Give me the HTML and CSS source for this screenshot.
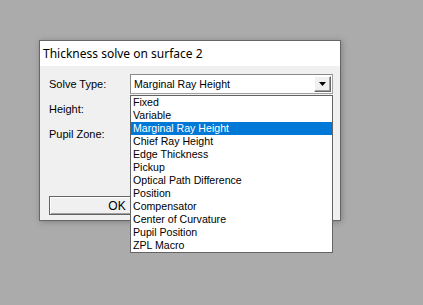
FILE: index.html
```html
<!DOCTYPE html>
<html>
<head>
    <title>Thickness solve on surface 2</title>
    <link rel="stylesheet" href="styles.css">
</head>
<body>
    <div class="dialog">
        <div class="titlebar">Thickness solve on surface 2</div>
        <div class="content">
            <div class="form">
                <label class="field-label">Solve Type:</label>
                <div class="combo-wrap">
                    <div class="combo">
                        <span class="combo-value">Marginal Ray Height</span>
                        <span class="combo-button">
                            <svg width="7" height="4" viewBox="0 0 7 4"><path d="M0 0H7L3.5 4Z" fill="#000"/></svg>
                        </span>
                    </div>
                    <ul class="dropdown">
                        <li>Fixed</li>
                        <li>Variable</li>
                        <li class="selected">Marginal Ray Height</li>
                        <li>Chief Ray Height</li>
                        <li>Edge Thickness</li>
                        <li>Pickup</li>
                        <li>Optical Path Difference</li>
                        <li>Position</li>
                        <li>Compensator</li>
                        <li>Center of Curvature</li>
                        <li>Pupil Position</li>
                        <li>ZPL Macro</li>
                    </ul>
                </div>

                <label class="field-label">Height:</label>
                <input class="field-input" type="text" value="0">

                <label class="field-label">Pupil Zone:</label>
                <input class="field-input" type="text" value="0">
            </div>

            <div class="buttons">
                <button class="btn btn-default">OK</button>
                <button class="btn">Cancel</button>
            </div>
        </div>
    </div>
</body>
</html>
```

FILE: styles.css
```css
html {
    height: 100%;
    background: #ababab;
}
body {
    margin: 0;
    min-height: 100%;
    box-sizing: border-box;
    padding: 40px 0 0 39px;
    background: #ababab;
    font-family: "Liberation Sans", Arial, sans-serif;
    font-size: 11px;
    color: #000;
}
.dialog {
    width: 300px;
    border: 1px solid #666;
    background: #f0f0f0;
    box-shadow: 1px 1px 6px rgba(0,0,0,0.25);
}
.titlebar {
    height: 25px;
    line-height: 25px;
    padding-left: 3px;
    background: #fff;
    font-family: "Noto Sans", sans-serif;
    font-size: 12px;
}
.content {
    padding: 8px 0 5px 9px;
}
.form {
    display: grid;
    grid-template-columns: 81px 203px;
    grid-auto-rows: 20px;
    row-gap: 5px;
    align-items: center;
}
.field-label {
    line-height: 20px;
}
.combo-wrap {
    position: relative;
    height: 20px;
    z-index: 2;
}
.combo {
    box-sizing: border-box;
    height: 20px;
    display: flex;
    align-items: center;
    border: 1px solid #a0a0a0;
    border-top-color: #8a8a8a;
    border-left-color: #8a8a8a;
    background: #fff;
    padding: 0 1px 0 3px;
}
.combo-value {
    flex: 1;
    font-size: 10.6px;
}
.combo-button {
    box-sizing: border-box;
    width: 17px;
    height: 16px;
    display: flex;
    align-items: center;
    justify-content: center;
    background: #f0f0f0;
    border: 1px solid;
    border-color: #fff #696969 #696969 #fff;
    box-shadow: inset -1px -1px 0 #a0a0a0;
}
.field-input {
    box-sizing: border-box;
    height: 20px;
    width: 203px;
    border: 1px solid #a0a0a0;
    font: inherit;
}
.dropdown {
    position: absolute;
    top: 21px;
    left: 0;
    width: 203px;
    box-sizing: border-box;
    margin: 0;
    padding: 0;
    list-style: none;
    background: #fff;
    border: 1px solid #646464;
    font-size: 10.6px;
}
.dropdown li {
    height: 13px;
    line-height: 13px;
    padding-left: 2px;
}
.dropdown .selected {
    background: #0078d7;
    color: #fff;
}
.buttons {
    display: flex;
    gap: 8px;
    margin-top: 52px;
}
.btn {
    width: 136px;
    height: 19px;
    padding: 0;
    font: inherit;
    font-size: 12px;
    background: #f0f0f0;
    border: 1px solid;
    border-color: #fff #696969 #696969 #fff;
    box-shadow: inset -1px -1px 0 #a0a0a0;
}
.btn-default {
    border: 1px solid #646464;
    box-shadow: inset 1px 1px 0 #fff, inset -1px -1px 0 #a0a0a0;
}
```
